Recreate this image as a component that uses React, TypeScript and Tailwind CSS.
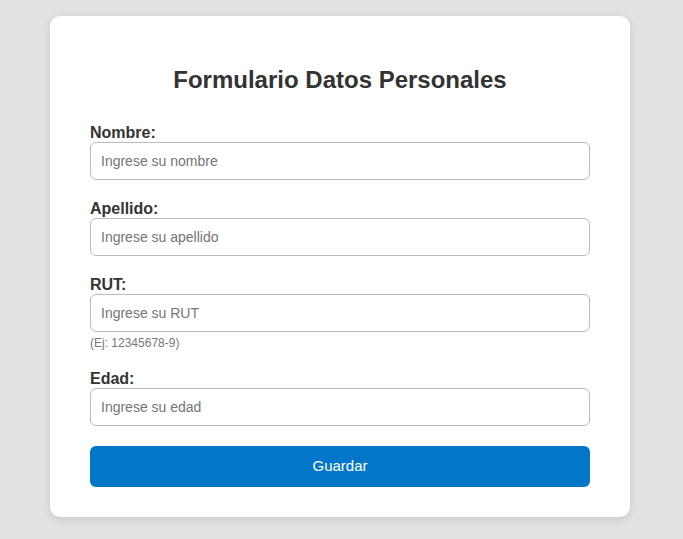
import type { ReactNode } from "react";

function Field({
  label,
  placeholder,
  hint,
}: {
  label: string;
  placeholder: string;
  hint?: ReactNode;
}) {
  return (
    <div className="mb-5 flex flex-col">
      <label className="text-[16px] leading-[18px] font-bold text-[#333]">
        {label}
      </label>
      <input
        type="text"
        placeholder={placeholder}
        className="h-[38px] w-full rounded-[6px] border border-[#bbb] bg-white px-[10px] text-[14px] text-[#333] placeholder:text-[#757575] outline-none"
      />
      {hint && (
        <span className="mt-[4px] text-[12px] leading-[14px] text-[#777]">
          {hint}
        </span>
      )}
    </div>
  );
}

export default function App() {
  return (
    <div
      className="flex min-h-[539px] w-full bg-[#e1e2e4] pt-4 pl-[50px]"
      style={{ fontFamily: '"Liberation Sans", Arial, sans-serif' }}
    >
      <div className="h-[501px] w-[580px] rounded-[10px] bg-white px-10 pt-[30px] pb-[30px] shadow-[0_2px_10px_rgba(0,0,0,0.12)]">
        <h2 className="mt-[20px] mb-[30px] text-center text-[24px] leading-[28px] font-bold text-[#333]">
          Formulario Datos Personales
        </h2>
        <form className="flex flex-col" onSubmit={(e) => e.preventDefault()}>
          <Field label="Nombre:" placeholder="Ingrese su nombre" />
          <Field label="Apellido:" placeholder="Ingrese su apellido" />
          <Field
            label="RUT:"
            placeholder="Ingrese su RUT"
            hint="(Ej: 12345678-9)"
          />
          <Field label="Edad:" placeholder="Ingrese su edad" />
          <button
            type="submit"
            className="h-[41px] w-full rounded-[6px] bg-[#0277c9] text-[15px] text-white"
          >
            Guardar
          </button>
        </form>
      </div>
    </div>
  );
}
